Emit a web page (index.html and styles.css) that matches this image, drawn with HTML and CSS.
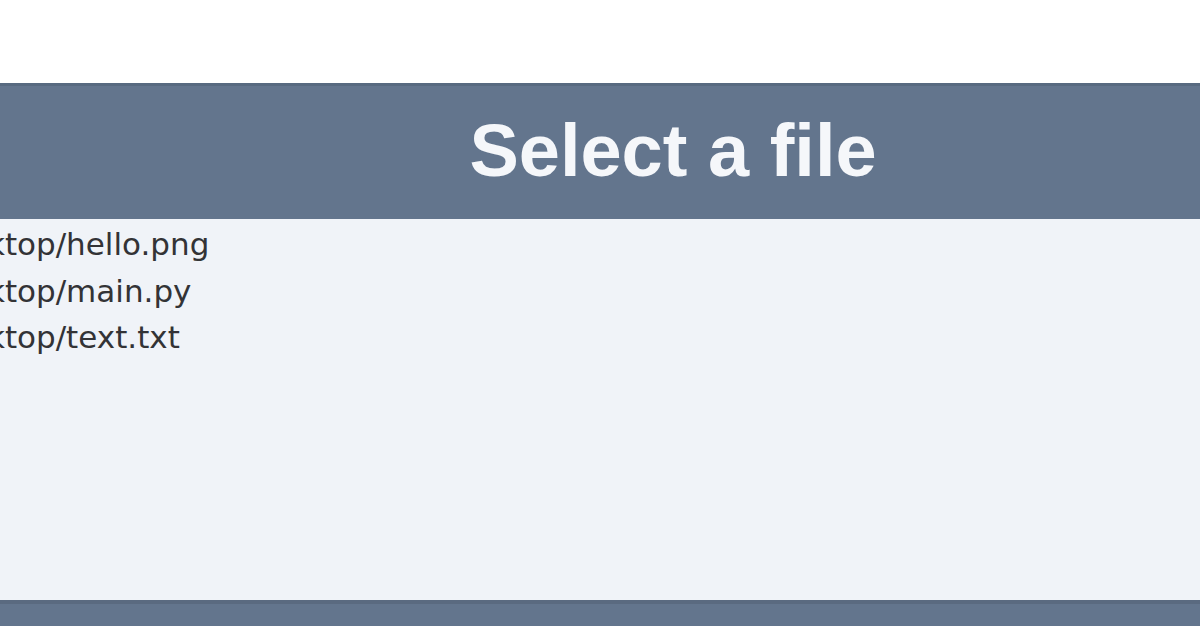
FILE: index.html
```html
<!DOCTYPE html>
<html lang="en">
<head>
    <meta charset="UTF-8">
    <meta name="viewport" content="width=device-width, initial-scale=1.0">
    <title>Select a file</title>
    <link rel="stylesheet" href="styles.css">
</head>
<body>
    <div class="page">
        <!-- File picker dialog -->
        <div class="picker">
            <header class="picker-header">
                <h1>Select a file</h1>
            </header>

            <ul class="file-list">
                <li>/home/user/Desktop/hello.png</li>
                <li>/home/user/Desktop/main.py</li>
                <li>/home/user/Desktop/text.txt</li>
            </ul>

            <footer class="picker-footer"></footer>
        </div>
    </div>
</body>
</html>
```

FILE: styles.css
```css
* {
    margin: 0;
    padding: 0;
    box-sizing: border-box;
}

html, body {
    height: 100%;
    overflow: hidden;
}

body {
    font-family: "Liberation Sans", Arial, sans-serif;
    background: #ffffff;
}

.page {
    padding-top: 83px;
}

.picker {
    width: 1946px;
    margin-left: -300px;
    display: flex;
    flex-direction: column;
}

/* Header */
.picker-header {
    height: 136px;
    background: #63758d;
    border-top: 3px solid #586a80;
    display: flex;
    align-items: center;
    justify-content: center;
}

.picker-header h1 {
    font-size: 74px;
    font-weight: bold;
    color: #f5f7fa;
    line-height: 1;
    margin-top: -3px;
}

/* File list */
.file-list {
    list-style: none;
    height: 381px;
    background: #f0f3f8;
    padding-top: 2px;
    padding-left: 41px;
    font-family: "DejaVu Sans", sans-serif;
    font-size: 31px;
    line-height: 46.5px;
    color: #333336;
}

/* Footer */
.picker-footer {
    height: 40px;
    background: #63758d;
    border-top: 4px solid #5a6a80;
}
```
